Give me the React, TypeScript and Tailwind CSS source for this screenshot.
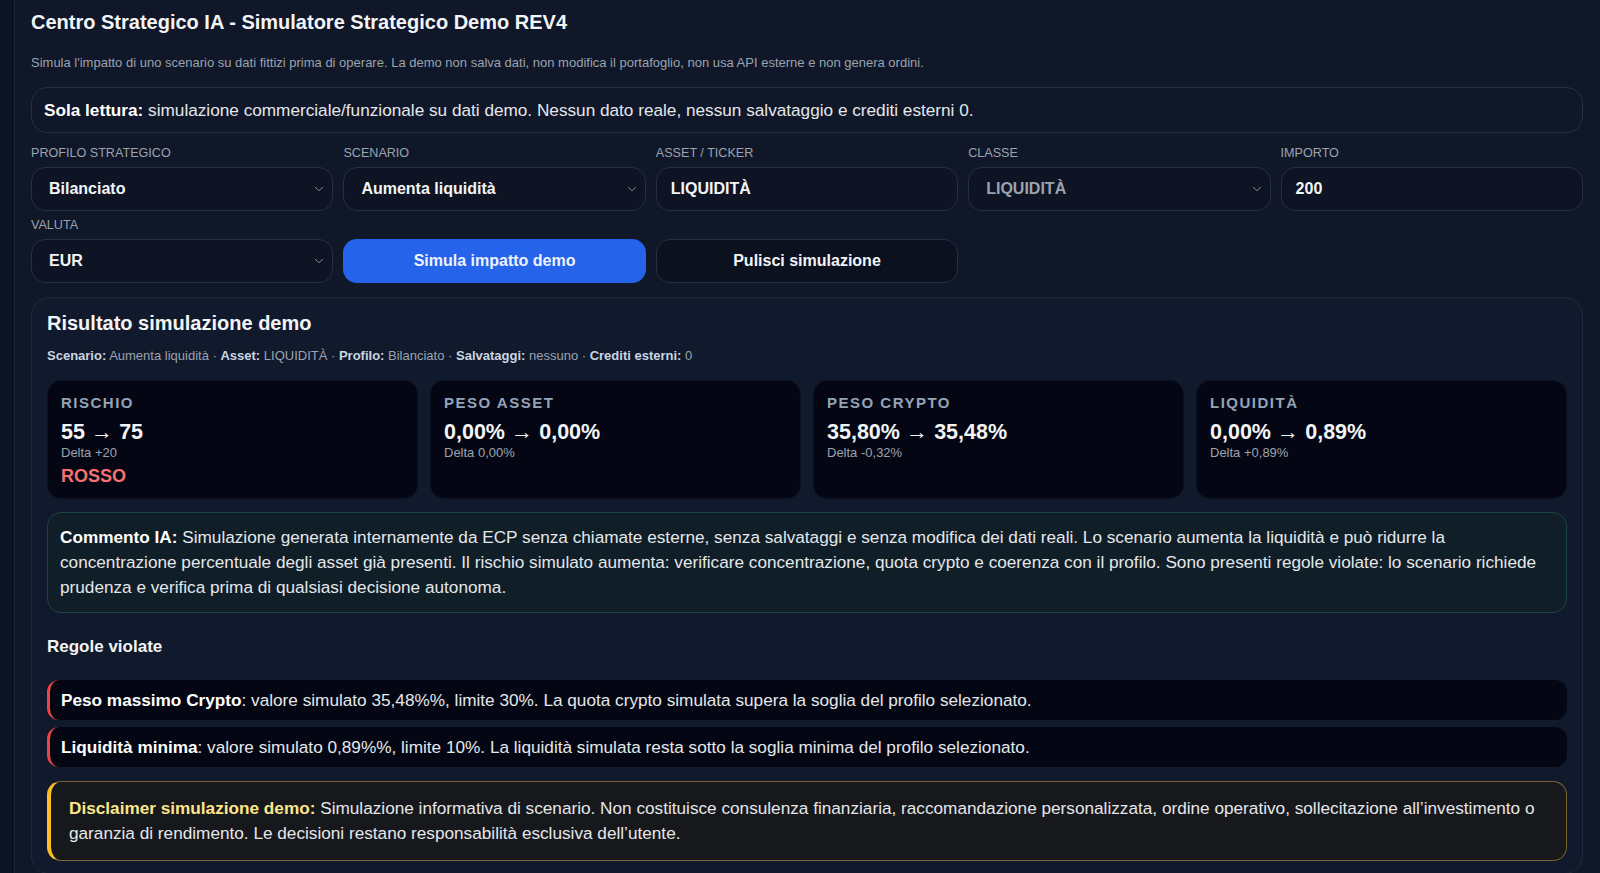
import { ChevronDown } from 'lucide-react'

const metrics = [
  { label: 'RISCHIO', from: '55', to: '75', delta: 'Delta +20', flag: 'ROSSO' },
  { label: 'PESO ASSET', from: '0,00%', to: '0,00%', delta: 'Delta 0,00%' },
  { label: 'PESO CRYPTO', from: '35,80%', to: '35,48%', delta: 'Delta -0,32%' },
  { label: 'LIQUIDITÀ', from: '0,00%', to: '0,89%', delta: 'Delta +0,89%' },
]

const rules = [
  {
    title: 'Peso massimo Crypto',
    text: ': valore simulato 35,48%%, limite 30%. La quota crypto simulata supera la soglia del profilo selezionato.',
  },
  {
    title: 'Liquidità minima',
    text: ': valore simulato 0,89%%, limite 10%. La liquidità simulata resta sotto la soglia minima del profilo selezionato.',
  },
]

const Label = ({ children }: { children: string }) => (
  <div className="text-[12.6px] leading-4 text-[#9ca3af] mb-[6px] uppercase">{children}</div>
)

const SelectBox = ({ value, muted }: { value: string; muted?: boolean }) => (
  <div className="h-[44px] flex items-center justify-between rounded-[14px] border border-[#243044] bg-[#0e1424] pl-[17px] pr-[6px]">
    <span className={`font-bold text-base ${muted ? 'text-[#9ca3af]' : 'text-[#f3f4f6]'}`}>{value}</span>
    <ChevronDown className="w-[14px] h-[14px] text-[#9ca3af]" strokeWidth={1.5} />
  </div>
)

const InputBox = ({ value }: { value: string }) => (
  <div className="h-[44px] flex items-center rounded-[14px] border border-[#243044] bg-[#0e1424] px-[14px]">
    <span className="font-bold text-base text-[#f3f4f6]">{value}</span>
  </div>
)

export default function App() {
  return (
    <div className="min-h-screen bg-[#0c1322] pl-[14px] font-['Liberation_Sans',Arial,sans-serif] text-[#e5e7eb]">
      <div className="min-h-screen bg-[#0f1729] border-l border-[#1c2638] pl-4 pr-[17px] pt-2 pb-3">
        <h1 className="text-xl leading-7 font-bold text-[#f3f4f6]">
          Centro Strategico IA - Simulatore Strategico Demo REV4
        </h1>
        <p className="mt-[19px] text-[13px] leading-4 text-[#9ca3af]">
          Simula l'impatto di uno scenario su dati fittizi prima di operare. La demo non salva dati, non modifica il portafoglio, non usa API esterne e non genera ordini.
        </p>

        <div className="mt-4 rounded-[16px] border border-[#243044] bg-[#0f1729] px-3 py-3 text-[17.2px] leading-5">
          <b className="font-bold text-white">Sola lettura:</b> simulazione commerciale/funzionale su dati demo. Nessun dato reale, nessun salvataggio e crediti esterni 0.
        </div>

        <div className="mt-3 grid grid-cols-5 gap-x-[10px] gap-y-[6px]">
          <div>
            <Label>Profilo strategico</Label>
            <SelectBox value="Bilanciato" />
          </div>
          <div>
            <Label>Scenario</Label>
            <SelectBox value="Aumenta liquidità" />
          </div>
          <div>
            <Label>Asset / Ticker</Label>
            <InputBox value="LIQUIDITÀ" />
          </div>
          <div>
            <Label>Classe</Label>
            <SelectBox value="LIQUIDITÀ" muted />
          </div>
          <div>
            <Label>Importo</Label>
            <InputBox value="200" />
          </div>
          <div>
            <Label>Valuta</Label>
            <SelectBox value="EUR" />
          </div>
          <div className="flex flex-col justify-end">
            <button className="h-[44px] rounded-[14px] bg-[#2563eb] font-bold text-base text-[#eef2ff]">
              Simula impatto demo
            </button>
          </div>
          <div className="flex flex-col justify-end">
            <button className="h-[44px] rounded-[14px] border border-[#243044] bg-[#0b111f] font-bold text-base text-[#f3f4f6]">
              Pulisci simulazione
            </button>
          </div>
        </div>

        <section className="mt-[14px] rounded-[18px] border border-[#1f2a3d] bg-[#111a2c] px-[15px] pt-[11px] pb-3">
          <h2 className="text-xl leading-7 font-bold text-[#f3f4f6]">Risultato simulazione demo</h2>
          <p className="mt-[11px] text-[13px] leading-4 text-[#9ca3af]">
            <b className="text-[#cbd5e1]">Scenario:</b> Aumenta liquidità · <b className="text-[#cbd5e1]">Asset:</b> LIQUIDITÀ ·{' '}
            <b className="text-[#cbd5e1]">Profilo:</b> Bilanciato · <b className="text-[#cbd5e1]">Salvataggi:</b> nessuno ·{' '}
            <b className="text-[#cbd5e1]">Crediti esterni:</b> 0
          </p>

          <div className="mt-4 grid grid-cols-4 gap-3">
            {metrics.map((m) => (
              <div key={m.label} className="h-[119px] rounded-[14px] border border-[#0b1120] bg-[#040713] px-[13px] pt-[12px]">
                <div className="text-[15px] leading-5 font-bold tracking-[1.5px] text-[#94a3b8]">{m.label}</div>
                <div className="mt-[7px] text-[21.5px] leading-6 font-bold text-[#f3f4f6]">
                  {m.from}
                  <span className="font-normal text-[22px]"> → </span>
                  {m.to}
                </div>
                <div className="text-[13px] leading-[18px] text-[#9ca3af]">{m.delta}</div>
                {m.flag && <div className="mt-[2px] text-lg leading-6 font-bold text-[#f87171]">{m.flag}</div>}
              </div>
            ))}
          </div>

          <div className="mt-[13px] rounded-[14px] border border-[#1b4347] bg-[#0f1e27] px-3 py-3 text-[17.2px] leading-[25px]">
            <b className="text-white">Commento IA:</b> Simulazione generata internamente da ECP senza chiamate esterne, senza salvataggi e senza modifica dei dati reali. Lo scenario aumenta la liquidità e può ridurre la concentrazione percentuale degli asset già presenti. Il rischio simulato aumenta: verificare concentrazione, quota crypto e coerenza con il profilo. Sono presenti regole violate: lo scenario richiede prudenza e verifica prima di qualsiasi decisione autonoma.
          </div>

          <h3 className="mt-[22px] text-[17px] leading-6 font-bold text-[#f3f4f6]">Regole violate</h3>

          <div className="mt-[21px] flex flex-col gap-[7px]">
            {rules.map((r) => (
              <div key={r.title} className="rounded-[12px] border-l-[3px] border-[#ef4444] bg-[#040713] pl-[11px] py-[10px] text-[17.2px] leading-5">
                <b className="text-white">{r.title}</b>
                {r.text}
              </div>
            ))}
          </div>

          <div className="mt-[14px] rounded-[14px] border border-[#7a6430] border-l-4 border-l-[#fbbf24] bg-[#17181c] pl-[18px] pr-4 py-[14px] text-[17.2px] leading-[25px]">
            <b className="text-[#fde68a]">Disclaimer simulazione demo:</b> Simulazione informativa di scenario. Non costituisce consulenza finanziaria, raccomandazione personalizzata, ordine operativo, sollecitazione all’investimento o garanzia di rendimento. Le decisioni restano responsabilità esclusiva dell’utente.
          </div>
        </section>
      </div>
    </div>
  )
}
